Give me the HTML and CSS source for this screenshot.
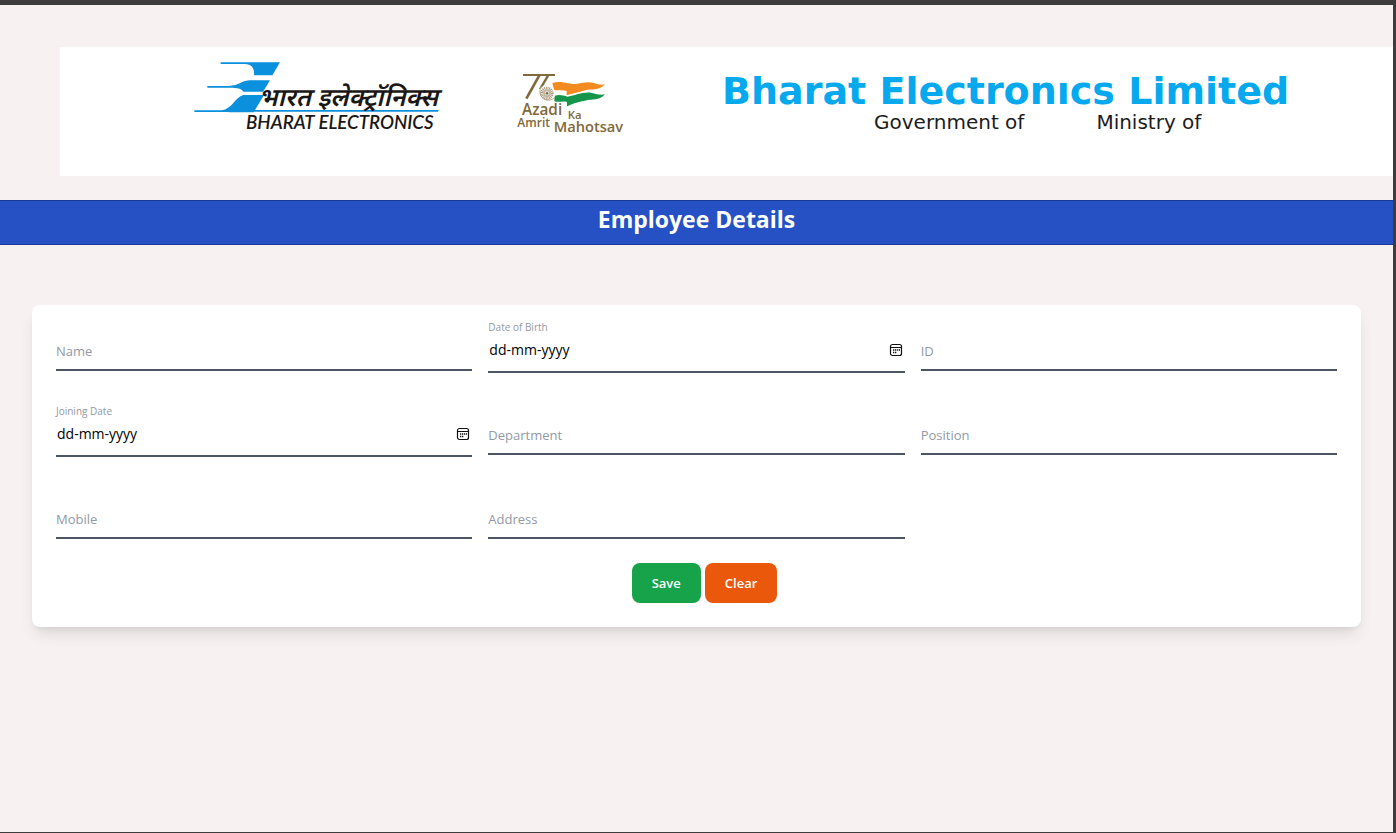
FILE: index.html
```html
<!DOCTYPE html>
<html lang="en">
<head>
<meta charset="utf-8">
<title>Employee Details</title>
<link rel="stylesheet" href="styles.css">
</head>
<body>
<div class="page">
  <header class="banner">
    <svg class="logo-bel" viewBox="0 0 870 270" role="img" aria-label="Bharat Electronics">
      <g fill="#0a90dc">
        <path d="M122 37H300L277 76H222C224 55 216 43 194 42H122Z"/>
        <path d="M82 108H145C182 107 180 91 215 91H270L249 125H190C184 115 172 113 150 113H82Z"/>
        <path d="M190 135H252L221 187H152C150 186 140 186 130 186H43V181H125C155 178 165 142 190 135Z"/>
        <path d="M221 180H776L774 185H219Z"/>
      </g>
      <text class="logo-hindi" x="242" y="169" transform="translate(36 0) skewX(-14)">भारत इलेक्ट्रॉनिक्स</text>
      <text class="logo-english" x="198" y="236">BHARAT ELECTRONICS</text>
    </svg>
    <svg class="logo-azadi" viewBox="0 0 420 255" role="img" aria-label="Azadi Ka Amrit Mahotsav">
      <g fill="none" stroke="#80693a">
        <path d="M69 45H165" stroke-width="6"/>
        <path d="M118 46L79 116" stroke-width="8"/>
        <path d="M144 47L120 88" stroke-width="7"/>
      </g>
      <path d="M157 69C175 64 190 67 204 70C235 78 257 60 284 70Q299 76 315 73C294 95 277 85 256 91C234 98 217 101 200 106V93C187 88 173 93 162 90Z" fill="#f28a20"/>
      <path d="M164 107C180 103 190 107 203 110C230 106 250 94 276 99Q298 106 315 103C296 124 277 116 255 122C232 126 218 131 201 139V126C187 122 176 128 163 124Z" fill="#16964b"/>
      <circle cx="141" cy="100" r="25" fill="#fff"/>
      <path d="M125 80A25 25 0 1 0 165 111" fill="none" stroke="#b8a986" stroke-width="3"/>
      <circle cx="141" cy="100" r="16" fill="none" stroke="#a99a7c" stroke-width="8" stroke-dasharray="3 2"/>
      <circle cx="141" cy="100" r="9" fill="none" stroke="#c3b79f" stroke-width="6"/>
      <circle cx="141" cy="100" r="4" fill="#80693a"/>
      <g class="azadi-text">
        <text x="66" y="166" font-size="46">Azadi</text>
        <text x="203" y="176" font-size="34">Ka</text>
        <text x="52" y="202" font-size="36">Amrit</text>
        <text x="161" y="216" font-size="44">Mahotsav</text>
      </g>
    </svg>
    <div class="company">
      <div class="company-name">Bharat Electronıcs Limited</div>
      <div class="company-sub"><span>Government of</span><span>Ministry of</span></div>
    </div>
  </header>

  <h1 class="title-bar">Employee Details</h1>

  <form class="card">
    <div class="fields">
      <div class="field">
        <input class="input" id="name" type="text">
        <label class="label" for="name">Name</label>
      </div>
      <div class="field">
        <div class="date-control">
          <input class="date-input" id="dob" type="text" placeholder="dd-mm-yyyy">
          <button class="picker" type="button" aria-label="Choose date of birth">
            <svg viewBox="0 0 14 14"><rect x="1.5" y="1.5" width="11" height="11" rx="2" fill="none" stroke="#111" stroke-width="1.2"/><path d="M2 4.5H12" stroke="#111"/><path d="M6 7H7.3M8 7H9.3M10 7H11M4 9.5H5.3M6 9.5H7.3M4 7H5.3" stroke="#111" stroke-width="1.4"/></svg>
          </button>
        </div>
        <label class="label label-floated" for="dob">Date of Birth</label>
      </div>
      <div class="field">
        <input class="input" id="emp-id" type="text">
        <label class="label" for="emp-id">ID</label>
      </div>
      <div class="field">
        <div class="date-control">
          <input class="date-input" id="joined" type="text" placeholder="dd-mm-yyyy">
          <button class="picker" type="button" aria-label="Choose joining date">
            <svg viewBox="0 0 14 14"><rect x="1.5" y="1.5" width="11" height="11" rx="2" fill="none" stroke="#111" stroke-width="1.2"/><path d="M2 4.5H12" stroke="#111"/><path d="M6 7H7.3M8 7H9.3M10 7H11M4 9.5H5.3M6 9.5H7.3M4 7H5.3" stroke="#111" stroke-width="1.4"/></svg>
          </button>
        </div>
        <label class="label label-floated" for="joined">Joining Date</label>
      </div>
      <div class="field">
        <input class="input" id="department" type="text">
        <label class="label" for="department">Department</label>
      </div>
      <div class="field">
        <input class="input" id="position" type="text">
        <label class="label" for="position">Position</label>
      </div>
      <div class="field">
        <input class="input" id="mobile" type="text">
        <label class="label" for="mobile">Mobile</label>
      </div>
      <div class="field">
        <input class="input" id="address" type="text">
        <label class="label" for="address">Address</label>
      </div>
    </div>
    <div class="actions">
      <button class="button button-save" type="submit">Save</button>
      <button class="button button-clear" type="reset">Clear</button>
    </div>
  </form>
</div>
</body>
</html>
```

FILE: styles.css
```css
* {
  box-sizing: border-box;
}

body {
  margin: 0;
  font-family: "Open Sans", "Noto Sans", sans-serif;
  font-size: 13px;
  line-height: 20px;
}

.page {
  min-height: 100vh;
  padding-top: 42px;
  background: #f7f1f1;
  border: solid #3c3c3c;
  border-width: 5px 3px 1px 0;
}

.banner {
  display: flex;
  align-items: flex-start;
  margin-left: 60px;
  padding: 3px 0 36px 120px;
  background: #fff;
}

.logo-bel {
  flex: none;
  width: 290px;
  height: 90px;
}

.logo-azadi {
  flex: none;
  width: 140px;
  height: 85px;
  margin: 10px 0 -5px 30px;
}

.logo-hindi {
  font: 600 76px "Noto Sans", "Noto Sans Devanagari", sans-serif;
  fill: #1a1716;
}

.logo-english {
  font: italic 600 56px Lato, sans-serif;
  fill: #1a1716;
}

.azadi-text {
  font-family: "Open Sans", sans-serif;
  font-weight: 600;
  fill: #80693a;
}

.company {
  margin: 21px 0 0 82px;
  font-family: "DejaVu Sans", sans-serif;
  white-space: nowrap;
}

.company-name {
  font-size: 38px;
  font-weight: bold;
  line-height: 40px;
  color: #06a8ee;
}

.company-sub {
  display: flex;
  gap: 72px;
  padding-left: 152px;
  font-size: 20px;
  line-height: 22px;
  color: #1c1c1c;
}

.title-bar {
  margin: 24px 0 0;
  padding: 2px 0 9px;
  border: solid #173a94;
  border-width: 1px 0;
  background: #2551c4;
  color: #fff;
  font-size: 23px;
  font-weight: 700;
  line-height: 32px;
  text-align: center;
}

.card {
  margin: 60px 32px 0;
  padding: 24px;
  border-radius: 8px;
  background: #fff;
  box-shadow: 0 10px 15px -3px rgba(0, 0, 0, 0.1), 0 4px 6px -4px rgba(0, 0, 0, 0.1);
}

.fields {
  display: grid;
  grid-template-columns: repeat(3, 1fr);
  gap: 40px 16px;
  grid-auto-rows: 44px;
}

.field {
  position: relative;
}

.input,
.date-input {
  display: block;
  width: 100%;
  padding: 10px 0;
  border: 0;
  outline: 0;
  background: transparent;
  color: #000;
  font: inherit;
}

.date-input {
  font-size: 14px;
}

.input,
.date-control {
  border-bottom: 2px solid #4b5563;
}

.date-control {
  display: flex;
  align-items: center;
  padding: 1px 2px 1px 1px;
}

.date-input::placeholder {
  color: #000;
  opacity: 1;
}

.picker {
  flex: none;
  width: 14px;
  height: 14px;
  padding: 0;
  border: 0;
  background: none;
}

.picker svg {
  display: block;
}

.label {
  position: absolute;
  top: 12px;
  left: 0;
  color: #9299a5;
}

.label-floated {
  top: -10px;
  font-size: 10px;
  line-height: 16px;
}

.actions {
  display: flex;
  justify-content: center;
  gap: 4px;
  padding: 22px 0 0 16px;
}

.button {
  padding: 10px 20px;
  border: 0;
  border-radius: 8px;
  color: #fff;
  font: inherit;
  font-weight: 600;
}

.button-save {
  background: #16a34a;
}

.button-clear {
  background: #ea580c;
}
```
